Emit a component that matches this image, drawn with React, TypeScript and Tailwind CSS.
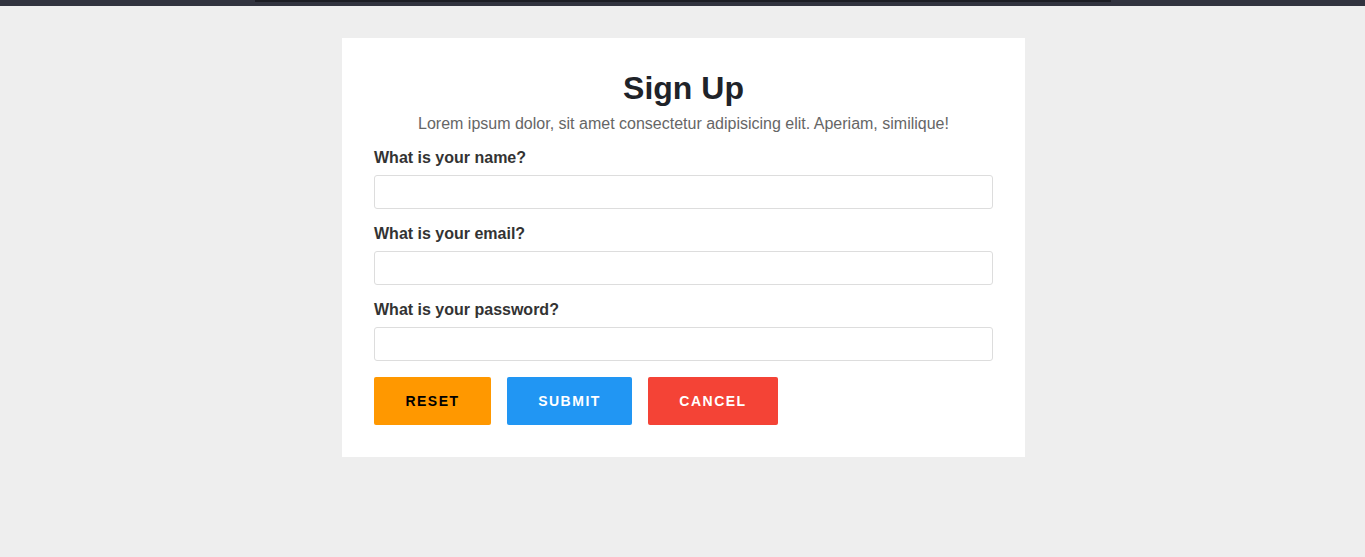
import React from 'react';

const font = { fontFamily: '"Liberation Sans", Arial, sans-serif' };

const fields = ['What is your name?', 'What is your email?', 'What is your password?'];

export default function App() {
  return (
    <div className="min-h-[557px] bg-[#eeeeee]" style={font}>
      {/* browser-ish top strip */}
      <div className="flex h-[6px] bg-[#31333f]">
        <div className="w-[255px]" />
        <div className="h-[2px] w-[856px] bg-[#1c1d24]" />
      </div>

      <div className="ml-[342px] mt-8 w-[683px] bg-white px-8 pt-8 pb-8">
        <h1 className="text-center text-[32px] font-bold leading-[37px] text-[#1f2329]">Sign Up</h1>
        <p className="mt-[8px] text-center text-[16px] leading-[18px] text-[#666666]">
          Lorem ipsum dolor, sit amet consectetur adipisicing elit. Aperiam, similique!
        </p>

        {fields.map((label, i) => (
          <div key={label} className={i === 0 ? 'mt-4' : 'mt-[16px]'}>
            <label className="block text-[16px] font-bold leading-[18px] text-[#333333]">{label}</label>
            <input
              type={i === 2 ? 'password' : i === 1 ? 'email' : 'text'}
              className="mt-[8px] block h-[34px] w-full rounded-[3px] border border-[#dddddd] bg-white px-2 outline-none"
            />
          </div>
        ))}

        <div className="mt-4 flex gap-4">
          <button className="h-12 w-[117px] rounded-[2px] bg-[#ff9800] text-[14px] font-bold uppercase tracking-[1.5px] text-black">
            Reset
          </button>
          <button className="h-12 w-[125px] rounded-[2px] bg-[#2196f3] text-[14px] font-bold uppercase tracking-[1.5px] text-white">
            Submit
          </button>
          <button className="h-12 w-[130px] rounded-[2px] bg-[#f44336] text-[14px] font-bold uppercase tracking-[1.5px] text-white">
            Cancel
          </button>
        </div>
      </div>
    </div>
  );
}
